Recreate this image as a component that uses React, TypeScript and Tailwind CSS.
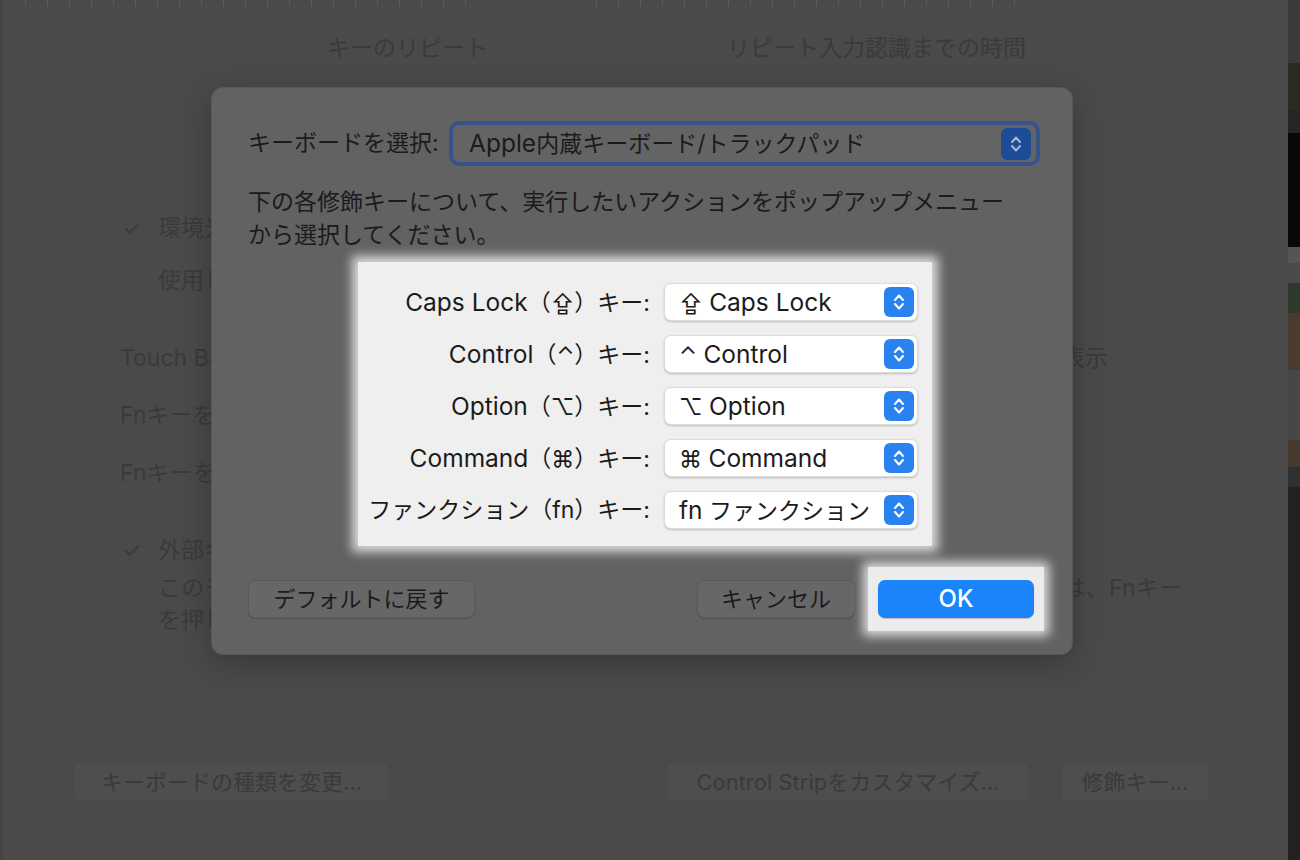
import React from "react"

const ticksA = Array.from({ length: 21 }, (_, i) => i)
const ticksB = Array.from({ length: 20 }, (_, i) => i)

function Stepper({ dim }: { dim?: boolean }) {
  return (
    <div
      className={
        dim
          ? "flex h-[32px] w-[30px] shrink-0 items-center justify-center rounded-[6px] bg-[#1d4d96]"
          : "flex h-[30px] w-[30px] shrink-0 items-center justify-center rounded-[6px] bg-[#2a82f1]"
      }
    >
      <svg width="16" height="24" viewBox="0 0 16 24" fill="none">
        <path
          d="M4 10 L8 5.5 L12 10 M4 14 L8 18.5 L12 14"
          stroke={dim ? "#a9b6cc" : "#ffffff"}
          strokeWidth="2"
          strokeLinecap="round"
          strokeLinejoin="round"
        />
      </svg>
    </div>
  )
}

// latin words run a touch larger so they match the system font's width
function L({ children }: { children: React.ReactNode }) {
  return <span className="text-[24.5px]">{children}</span>
}

const rows: { label: React.ReactNode; value: React.ReactNode }[] = [
  { label: <><L>Caps Lock</L>（⇪）キー:</>, value: <>⇪ <L>Caps Lock</L></> },
  { label: <><L>Control</L>（⌃）キー:</>, value: <>⌃ <L>Control</L></> },
  { label: <><L>Option</L>（⌥）キー:</>, value: <>⌥ <L>Option</L></> },
  { label: <><L>Command</L>（⌘）キー:</>, value: <>⌘ <L>Command</L></> },
  { label: <>ファンクション（fn）キー:</>, value: <><L>fn</L> ファンクション</> },
]

function ModifierRow({ label, value }: { label: React.ReactNode; value: React.ReactNode }) {
  return (
    <div className="flex h-[38px] items-center justify-end gap-[14px]">
      <span className="whitespace-nowrap">{label}</span>
      <div className="flex h-[38px] w-[254px] shrink-0 items-center justify-between rounded-[7px] border border-[#dcdcdc] bg-white pl-[14px] pr-[3px] shadow-[0_1px_2px_rgba(0,0,0,0.22)]">
        <span className="whitespace-nowrap">{value}</span>
        <Stepper />
      </div>
    </div>
  )
}

function Dialog() {
  return (
    <div className="absolute left-[211px] top-[87px] flex h-[568px] w-[862px] flex-col rounded-[12px] border border-[#575757] bg-[#626262] px-[36px] pt-[33px] text-[23px] text-[#1b1b1b] shadow-[0_8px_30px_rgba(0,0,0,0.25)]">
      <div className="flex h-[45px] items-center">
        <span className="w-[201px] shrink-0 whitespace-nowrap">キーボードを選択:</span>
        <div className="flex h-[45px] w-[591px] shrink-0 items-center justify-between rounded-[10px] border-[4px] border-[#34548c] bg-[#646464] pl-[16px] pr-[5px]">
          <span className="whitespace-nowrap">
            <L>Apple</L>内蔵キーボード/トラックパッド
          </span>
          <Stepper dim />
        </div>
      </div>

      <p className="mt-[20px] leading-[33px]">
        下の各修飾キーについて、実行したいアクションをポップアップメニュー
        <br />
        から選択してください。
      </p>

      <div className="ml-[110px] mt-[10px] flex w-[574px] flex-col gap-[14px] bg-[#efefef] px-[14px] pb-[17px] pt-[21px] shadow-[0_0_10px_6px_rgba(240,240,240,0.85)]">
        {rows.map((r, i) => (
          <ModifierRow key={i} label={r.label} value={r.value} />
        ))}
      </div>

      <div className="mt-[34px] flex items-center pr-[2px]">
        <button className="h-[38px] w-[227px] rounded-[7px] border border-[#595959] bg-[#676767] text-[22px] text-[#1b1b1b] shadow-[0_1px_1px_rgba(0,0,0,0.15)]">
          デフォルトに戻す
        </button>
        <div className="flex-1" />
        <button className="h-[38px] w-[158px] rounded-[7px] border border-[#595959] bg-[#676767] text-[22px] text-[#1b1b1b] shadow-[0_1px_1px_rgba(0,0,0,0.15)]">
          キャンセル
        </button>
        <div className="-my-[13px] -mr-[10px] ml-[13px] bg-[#ececec] px-[10px] py-[13px] shadow-[0_0_10px_5px_rgba(240,240,240,0.85)]">
          <button className="h-[38px] w-[156px] rounded-[7px] bg-[#1c84fb] text-[24px] font-medium text-white shadow-[0_1px_1px_rgba(0,0,0,0.2)]">
            OK
          </button>
        </div>
      </div>
    </div>
  )
}

function Wallpaper() {
  return (
    <div className="flex w-[12px] flex-col">
      <div className="h-[63px] bg-[#3a3a3a]" />
      <div className="h-[47px] bg-[#2b2a24]" />
      <div className="h-[23px] bg-[#262626]" />
      <div className="h-[114px] bg-[#080808]" />
      <div className="h-[16px] bg-[#555555]" />
      <div className="h-[20px] bg-[#4a4a4a]" />
      <div className="h-[30px] bg-[#2f392c]" />
      <div className="h-[57px] bg-[#4b3b2d]" />
      <div className="h-[70px] bg-[#474747]" />
      <div className="h-[27px] bg-[#46392d]" />
      <div className="h-[20px] bg-[#303030]" />
      <div className="flex-1 bg-[#222222]" />
    </div>
  )
}

export default function App() {
  return (
    <div className="relative flex h-[860px] w-[1300px] overflow-hidden bg-[#4a4a4a] font-['Inter','Noto_Sans_CJK_JP','DejaVu_Sans',sans-serif]">
      {/* dimmed preference window */}
      <div className="flex flex-1 flex-col border-l-[3px] border-[#444444] text-[23px] leading-[28px] text-[#3a3a3a]">
        <div className="flex h-[8px] items-start">
          <div className="ml-[22px] flex gap-[21px]">
            {ticksA.map((i) => (
              <div key={i} className="h-[6px] w-[1px] bg-[#5a5a5a]" />
            ))}
          </div>
          <div className="ml-[130px] flex gap-[21px]">
            {ticksB.map((i) => (
              <div key={i} className="h-[6px] w-[1px] bg-[#5a5a5a]" />
            ))}
          </div>
        </div>

        <div className="mt-[26px] flex whitespace-nowrap pl-[324px]">
          <span>キーのリピート</span>
          <span className="ml-[239px]">リピート入力認識までの時間</span>
        </div>

        <div className="mt-[152px] flex items-center whitespace-nowrap pl-[119px]">
          <span className="w-[36px] text-[22px]">✓</span>
          <span>環境光が暗い場合にキーボードの輝度を調整</span>
        </div>
        <div className="mt-[24px] flex items-center whitespace-nowrap pl-[119px]">
          <span className="w-[36px]" />
          <span>使用していない状態が5秒続いた場合はキーボードバックライトをオフ</span>
        </div>
        <div className="mt-[50px] flex items-center justify-between whitespace-nowrap pl-[117px] pr-[180px]">
          <span>Touch Barに表示:</span>
          <span>Control Stripを表示</span>
        </div>
        <div className="mt-[29px] whitespace-nowrap pl-[117px]">Fnキーを押して:</div>
        <div className="mt-[30px] whitespace-nowrap pl-[117px]">Fnキーを押したままにすると:</div>
        <div className="mt-[49px] flex items-center whitespace-nowrap pl-[119px]">
          <span className="w-[36px] text-[22px]">✓</span>
          <span>外部キーボードでF1、F2などのキーを標準のファンクションキーとして使用</span>
        </div>
        <div className="mt-[10px] whitespace-nowrap pl-[155px] tracking-[0.25px]">
          このチェックボックスを選択すると、各キーに印刷されている特殊機能を使用するときは、Fnキー
        </div>
        <div className="mt-[4px] whitespace-nowrap pl-[155px]">を押します。</div>

        <div className="mt-[129px] flex h-[37px] items-center pl-[72px] text-[22px]">
          <div className="flex h-[37px] w-[313px] items-center justify-center rounded-[5px] bg-[#4e4e4e]">
            キーボードの種類を変更...
          </div>
          <div className="ml-[280px] flex h-[37px] w-[360px] items-center justify-center rounded-[5px] bg-[#4e4e4e]">
            Control Stripをカスタマイズ...
          </div>
          <div className="ml-[34px] flex h-[37px] w-[146px] items-center justify-center rounded-[5px] bg-[#4e4e4e]">
            修飾キー...
          </div>
        </div>
      </div>
      <Wallpaper />

      <Dialog />
    </div>
  )
}
